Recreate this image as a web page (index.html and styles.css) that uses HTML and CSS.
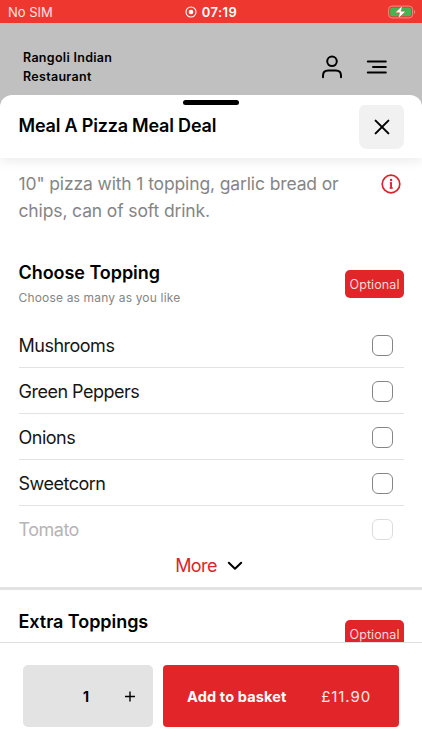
FILE: index.html
```html
<!DOCTYPE html>
<html lang="en">
<head>
  <meta charset="UTF-8">
  <meta name="viewport" content="width=device-width, initial-scale=1">
  <title>Meal A Pizza Meal Deal</title>
  <link rel="stylesheet" href="styles.css">
</head>
<body>

<div class="status-bar">
  <span class="carrier">No SIM</span>
  <span class="clock">
    <svg width="12" height="12" viewBox="0 0 12 12"><circle cx="6" cy="6" r="5" fill="none" stroke="#fff" stroke-width="1.1"/><circle cx="6" cy="6" r="2.3" fill="#fff"/></svg>
    <span class="time">07:19</span>
  </span>
  <svg class="battery" width="28" height="14" viewBox="0 0 28 14">
    <rect x=".6" y="1.1" width="24" height="11.8" rx="3.4" fill="none" stroke="#f58c80" stroke-width="1"/>
    <rect x="2.2" y="2.7" width="20.8" height="8.6" rx="1.8" fill="#41b653"/>
    <path d="M26 5v4c1.4-.6 1.4-3.4 0-4z" fill="#f58c80"/>
    <path d="M14.5.4 7 7.8h4.6l-1.4 5.8 7.6-7.4h-4.7z" fill="#fff" stroke="#ee382f" stroke-width=".5"/>
  </svg>
</div>

<header class="site-header">
  <div class="restaurant">Rangoli Indian<br>Restaurant</div>
  <div class="header-icons">
    <svg width="22" height="24" viewBox="0 0 22 24" fill="none" stroke="#000" stroke-width="2" stroke-linecap="round">
      <circle cx="11" cy="6.3" r="4.8"/>
      <path d="M2 22.3v-1.5c0-3.4 1.9-5.2 5.2-5.2h7.6c3.3 0 5.2 1.8 5.2 5.2v1.5"/>
    </svg>
    <svg width="22" height="16" viewBox="0 0 22 16" stroke="#000" stroke-width="2" stroke-linecap="round">
      <path d="M1.8 2.4h18M7 8h12.8M1.8 13.5h18"/>
    </svg>
  </div>
</header>

<main class="sheet">
  <div class="grabber"></div>
  <div class="sheet-header">
    <h1>Meal A Pizza Meal Deal</h1>
    <button class="close" aria-label="Close">
      <svg width="16" height="16" viewBox="0 0 16 16" stroke="#000" stroke-width="2" stroke-linecap="round"><path d="M1.6 1.6l12.8 12.8M14.4 1.6L1.6 14.4"/></svg>
    </button>
  </div>

  <div class="sheet-body">
    <div class="description">
      <p>10" pizza with 1 topping, garlic bread or chips, can of soft drink.</p>
      <svg width="20" height="20" viewBox="0 0 20 20" fill="none" stroke="#d9262c">
        <circle cx="10" cy="10" r="8.8" stroke-width="1.7"/>
        <path d="M8.8 8.8h1.4v5.4M8.6 14h3.2" stroke-width="1.3"/>
        <path d="M10.1 8.2v6" stroke-width="1.7"/>
        <circle cx="10.1" cy="6" r="1.2" fill="#d9262c" stroke="none"/>
      </svg>
    </div>

    <section class="group">
      <div class="group-header">
        <div>
          <h2>Choose Topping</h2>
          <p class="hint">Choose as many as you like</p>
        </div>
        <span class="badge">Optional</span>
      </div>
      <ul class="options">
        <li><span>Mushrooms</span><i class="checkbox"></i></li>
        <li><span>Green Peppers</span><i class="checkbox"></i></li>
        <li><span>Onions</span><i class="checkbox"></i></li>
        <li><span>Sweetcorn</span><i class="checkbox"></i></li>
        <li class="faded"><span>Tomato</span><i class="checkbox"></i></li>
      </ul>
      <div class="more">
        <span>More</span>
        <svg width="16" height="10" viewBox="0 0 16 10" fill="none" stroke="#000" stroke-width="2" stroke-linecap="round" stroke-linejoin="round"><path d="M1.8 1.8l6.2 6 6.2-6"/></svg>
      </div>
    </section>

    <section class="group extra">
      <div class="group-header">
        <h2>Extra Toppings</h2>
        <span class="badge">Optional</span>
      </div>
    </section>
  </div>

  <div class="sheet-footer">
    <div class="quantity">
      <span></span>
      <b>1</b>
      <svg width="12" height="12" viewBox="0 0 12 12" stroke="#000" stroke-width="1.4"><path d="M1 6.5h10M6 1.5v10"/></svg>
    </div>
    <button class="add">
      <b>Add to basket</b>
      <span class="price">£11.90</span>
    </button>
  </div>
</main>

</body>
</html>
```

FILE: styles.css
```css
* {
  box-sizing: border-box;
}

body {
  margin: 0;
  height: 750px;
  display: flex;
  flex-direction: column;
  overflow: hidden;
  font-family: Inter, "Liberation Sans", sans-serif;
  background: #c0c0c0;
  color: #000;
}

h1, h2, p, ul {
  margin: 0;
  padding: 0;
}

svg {
  display: block;
  flex: none;
}

button {
  border: none;
  padding: 0;
  font-family: inherit;
}

.status-bar {
  flex: none;
  height: 23px;
  display: grid;
  grid-template-columns: 1fr auto 1fr;
  align-items: center;
  padding: 0 6px 0 8px;
  background: #ee382f;
  color: #fff;
  font-size: 13px;
}

.carrier {
  padding-top: 1px;
  color: #fde3e1;
}

.clock {
  display: flex;
  align-items: center;
  gap: 5px;
  padding: 1px 2px 0 0;
  font-weight: 600;
  letter-spacing: 0.4px;
}

.battery {
  justify-self: end;
}

.site-header {
  flex: none;
  height: 72px;
  display: flex;
  justify-content: space-between;
  padding: 25px 34px 0 23px;
}

.restaurant {
  font-size: 12.5px;
  line-height: 19px;
  font-weight: 600;
  letter-spacing: 0.3px;
}

.header-icons {
  display: flex;
  gap: 23px;
  padding-top: 7px;
}

.header-icons svg + svg {
  margin-top: 4px;
}

.sheet {
  flex: 1;
  min-height: 0;
  display: flex;
  flex-direction: column;
  background: #fff;
  border-radius: 12px 12px 0 0;
}

.grabber {
  flex: none;
  width: 56px;
  height: 5px;
  margin: 5px auto 0;
  border-radius: 3px;
  background: #000;
}

.sheet-header {
  flex: none;
  height: 53px;
  display: flex;
  justify-content: space-between;
  padding: 0 18px 0 18.5px;
  box-shadow: 0 4px 10px rgba(0, 0, 0, 0.07);
  clip-path: inset(0 0 -16px 0);
}

h1, h2 {
  font-size: 18px;
  font-weight: 600;
  line-height: 24px;
  letter-spacing: -0.05px;
}

h1 {
  margin-top: 9px;
  letter-spacing: -0.2px;
}

.close {
  width: 45px;
  height: 45px;
  display: flex;
  align-items: center;
  justify-content: center;
  margin-top: -1px;
  border-radius: 8px;
  background: #f1f1f1;
}

.sheet-body {
  flex: 1;
  min-height: 0;
  overflow: hidden;
}

.description {
  display: flex;
  justify-content: space-between;
  padding: 12px 21px 0 18.5px;
  color: #858585;
}

.description p {
  width: 340px;
  font-size: 17.5px;
  line-height: 27px;
  letter-spacing: -0.13px;
}

.description svg {
  margin-top: 4px;
}

.group-header {
  display: flex;
  justify-content: space-between;
  padding: 37px 18px 0 18.5px;
}

.hint {
  margin-top: 5px;
  font-size: 12px;
  line-height: 16px;
  letter-spacing: 0.17px;
  color: #858585;
}

.badge {
  width: 59px;
  height: 28px;
  margin-top: 9px;
  border-radius: 5px;
  background: #e22529;
  color: #fbdcdc;
  font-size: 12.5px;
  line-height: 29px;
  text-align: center;
  letter-spacing: 0.1px;
}

.options {
  margin: 16px 18px 0 18.5px;
  list-style: none;
}

.options li {
  height: 46px;
  display: flex;
  align-items: center;
  justify-content: space-between;
  padding: 1px 11.5px 0 0;
  border-bottom: 1px solid #e3e3e3;
  font-size: 18px;
  letter-spacing: -0.5px;
  color: #161616;
}

.checkbox {
  width: 21px;
  height: 21px;
  border: 1px solid #858585;
  border-radius: 6px;
}

.options .faded {
  padding-top: 0;
  border-bottom: none;
  letter-spacing: -0.5px;
  color: #b5b5b5;
}

.faded .checkbox {
  border-color: #dcdcdc;
}

.more {
  display: flex;
  align-items: center;
  justify-content: center;
  gap: 10px;
  height: 27px;
  margin-bottom: 8px;
  padding-right: 4px;
  font-size: 18px;
  letter-spacing: -0.6px;
  color: #d9262c;
}

.extra {
  border-top: 3px solid #e3e3e3;
}

.extra .group-header {
  padding-top: 20px;
}

.extra .badge {
  margin-top: 10px;
}

.sheet-footer {
  flex: none;
  height: 108px;
  display: flex;
  gap: 10px;
  padding: 23px 23px 0;
  border-top: 1px solid #dfdfdf;
}

.quantity {
  width: 130px;
  height: 62px;
  display: grid;
  grid-template-columns: 42px 42px 46px;
  align-items: center;
  justify-items: center;
  margin-top: -1px;
  border-radius: 5px;
  background: #e3e3e3;
  font-size: 14px;
}

.add {
  flex: 1;
  height: 62px;
  display: flex;
  align-items: center;
  justify-content: space-between;
  margin-top: -1px;
  padding: 0 28px 0 24px;
  border-radius: 4px;
  background: #e22529;
  color: #fff;
  font-size: 14.5px;
  letter-spacing: 0.15px;
}

.price {
  font-size: 15px;
  letter-spacing: 0.9px;
  color: #fdeaea;
}
```
